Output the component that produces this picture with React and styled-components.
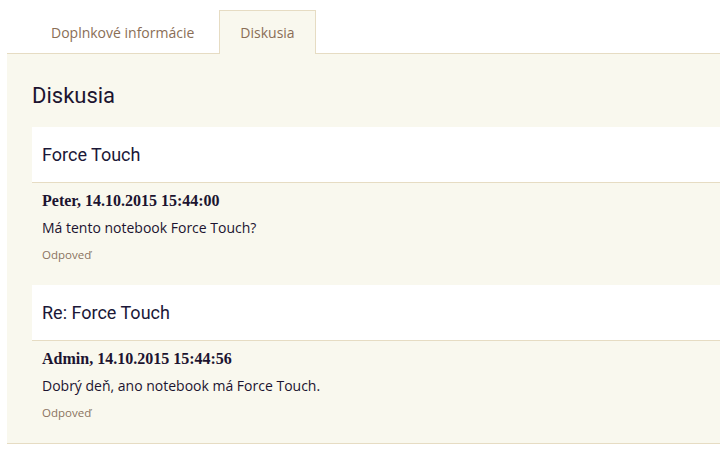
import React, { useState } from 'react';
import styled, { createGlobalStyle } from 'styled-components';

const GlobalStyle = createGlobalStyle`
  html, body {
    margin: 0;
    padding: 0;
    background: #fff;
    overflow: hidden;
  }
  body {
    font-family: "Open Sans", "Noto Sans", sans-serif;
  }
`;

const Page = styled.div`
  width: 720px;
  height: 450px;
  box-sizing: border-box;
  padding: 10px 0 0 7px;
  overflow: hidden;
`;

const TabList = styled.div`
  display: flex;
  padding-left: 19px;
  height: 43px;
  position: relative;
  z-index: 1;
`;

const Tab = styled.button`
  box-sizing: border-box;
  height: ${p => (p.$active ? '44px' : '43px')};
  padding: 0 ${p => (p.$active ? '20px' : '24px')};
  font-family: "Open Sans", "Noto Sans", sans-serif;
  font-size: 14px;
  color: #8a6e56;
  background: ${p => (p.$active ? '#f9f8ee' : 'transparent')};
  border: 1px solid ${p => (p.$active ? '#e6dcc3' : 'transparent')};
  border-bottom: none;
  cursor: pointer;
  outline: none;
`;

const Panel = styled.div`
  background: #f9f8ee;
  border-top: 1px solid #e6dcc3;
  border-bottom: 1px solid #e6dcc3;
  padding: 0 0 0 25px;
  height: 391px;
  box-sizing: border-box;
`;

const Heading = styled.h2`
  margin: 0;
  padding: 29px 0 19px;
  font-family: Roboto, sans-serif;
  font-weight: 400;
  font-size: 22px;
  line-height: 25px;
  color: #1c1430;
`;

const Thread = styled.div`
  display: flex;
  flex-direction: column;
`;

const TopicHeader = styled.div`
  background: #fff;
  height: 56px;
  box-sizing: border-box;
  border-bottom: 1px solid #e6dcc3;
  display: flex;
  align-items: center;
  padding-left: 10px;
  font-family: Roboto, sans-serif;
  font-size: 18px;
  color: #1b1838;
`;

const Comment = styled.div`
  padding: 8px 0 0 10px;
  height: 102px;
  box-sizing: border-box;
`;

const Author = styled.div`
  font-family: "Liberation Serif", "DejaVu Serif", serif;
  font-weight: 700;
  font-size: 16px;
  line-height: 20px;
  color: #1c1430;
`;

const Text = styled.p`
  margin: 7px 0 0;
  font-family: "Open Sans", "Noto Sans", sans-serif;
  font-size: 14px;
  line-height: 20px;
  color: #1c1430;
`;

const Reply = styled.a`
  display: inline-block;
  margin-top: 9px;
  font-family: "Open Sans", "Noto Sans", sans-serif;
  font-size: 11.5px;
  line-height: 16px;
  color: #8a7360;
  text-decoration: none;
  cursor: pointer;
`;

const posts = [
  {
    title: 'Force Touch',
    author: 'Peter, 14.10.2015 15:44:00',
    text: 'Má tento notebook Force Touch?',
  },
  {
    title: 'Re: Force Touch',
    author: 'Admin, 14.10.2015 15:44:56',
    text: 'Dobrý deň, ano notebook má Force Touch.',
  },
];

export default function App() {
  const [tab, setTab] = useState('diskusia');

  return (
    <>
      <GlobalStyle />
      <Page>
        <TabList>
          <Tab $active={tab === 'info'} onClick={() => setTab('info')}>
            Doplnkové informácie
          </Tab>
          <Tab $active={tab === 'diskusia'} onClick={() => setTab('diskusia')}>
            Diskusia
          </Tab>
        </TabList>
        <Panel>
          <Heading>Diskusia</Heading>
          <Thread>
            {posts.map(post => (
              <React.Fragment key={post.title}>
                <TopicHeader>{post.title}</TopicHeader>
                <Comment>
                  <Author>{post.author}</Author>
                  <Text>{post.text}</Text>
                  <Reply>Odpoveď</Reply>
                </Comment>
              </React.Fragment>
            ))}
          </Thread>
        </Panel>
      </Page>
    </>
  );
}
